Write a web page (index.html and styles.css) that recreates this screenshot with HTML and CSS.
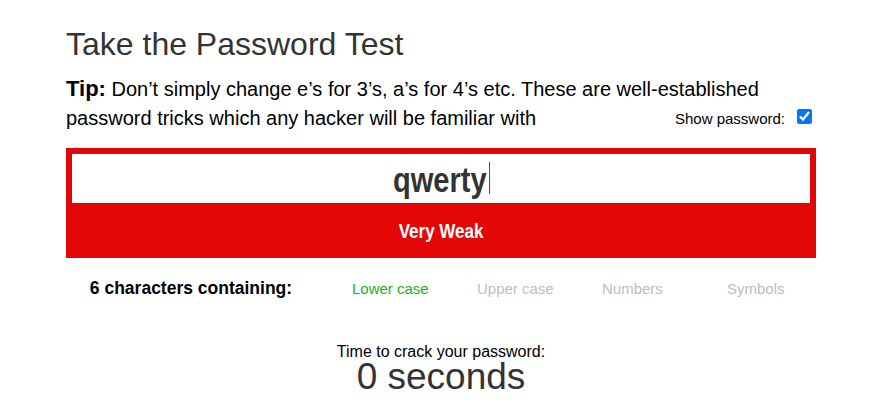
FILE: index.html
```html
<!DOCTYPE html>
<html lang="en">
<head>
<meta charset="utf-8">
<title>Take the Password Test</title>
<link rel="stylesheet" href="styles.css">
</head>
<body>
<main class="page">
  <h1 class="title">Take the Password Test</h1>
  <p class="tip"><strong class="tip-label">Tip:</strong> Don’t simply change e’s for 3’s, a’s for 4’s etc. These are well-established password tricks which any hacker will be familiar with<label class="show">Show password:<input type="checkbox" class="show-box" checked></label></p>

  <section class="meter">
    <div class="pw"><span class="pw-text">qwerty<span class="caret"></span></span></div>
    <div class="strength"><span class="strength-text">Very Weak</span></div>
  </section>

  <div class="contains">
    <div class="count">6 characters containing:</div>
    <div class="kind on">Lower case</div>
    <div class="kind">Upper case</div>
    <div class="kind">Numbers</div>
    <div class="kind">Symbols</div>
  </div>

  <div class="crack">
    <div class="crack-label">Time to crack your password:</div>
    <div class="crack-time">0 seconds</div>
  </div>
</main>
</body>
</html>
```

FILE: styles.css
```css
html, body {
  margin: 0;
  padding: 0;
  background: #fff;
}

body {
  font-family: "Liberation Sans", Arial, sans-serif;
  color: #000;
}

.page {
  width: 750px;
  margin: 0 63px 0 66px;
  padding-top: 26px;
}

.title {
  margin: 0;
  font-size: 32px;
  line-height: 36px;
  font-weight: normal;
  color: #333;
}

.tip {
  margin: 12px 0 0;
  font-size: 20px;
  line-height: 29px;
}

.tip-label {
  font-size: 22px;
}

.show {
  float: right;
  font-size: 15px;
  line-height: 29px;
}

.show-box {
  width: 15px;
  height: 15px;
  margin: 0 4px 0 12px;
  accent-color: #0075ff;
  vertical-align: baseline;
}

.meter {
  margin-top: 15px;
  border: 6px solid #e30707;
  border-bottom: 0;
  background: #e30707;
}

.pw {
  height: 49px;
  box-sizing: border-box;
  padding-top: 3px;
  line-height: 46px;
  background: #fff;
  text-align: center;
  color: #333;
  font-weight: bold;
  font-size: 35px;
}

.pw-text {
  display: inline-block;
  transform: scaleX(0.83);
  transform-origin: center;
}

.caret {
  display: inline-block;
  width: 1.2px;
  height: 32px;
  margin-left: 3px;
  background: #222;
  vertical-align: -2px;
}

.strength {
  height: 55px;
  line-height: 55px;
  text-align: center;
  color: #fff;
  font-weight: bold;
  font-size: 20.5px;
}

.strength-text {
  display: inline-block;
  transform: scaleX(0.83);
  transform-origin: center;
}

.contains {
  margin-top: 20px;
  display: grid;
  grid-template-columns: 250px repeat(4, 125px);
  align-items: baseline;
  line-height: 20px;
}

.count {
  text-align: center;
  font-weight: bold;
  font-size: 17.5px;
}

.kind {
  padding-left: 36px;
  font-size: 15px;
  color: #bdbdbd;
}

.kind.on {
  color: #22b022;
}

.crack {
  margin-top: 45px;
  text-align: center;
}

.crack-label {
  font-size: 16px;
  line-height: 15px;
}

.crack-time {
  font-size: 37px;
  line-height: 36px;
  color: #333;
}
```
